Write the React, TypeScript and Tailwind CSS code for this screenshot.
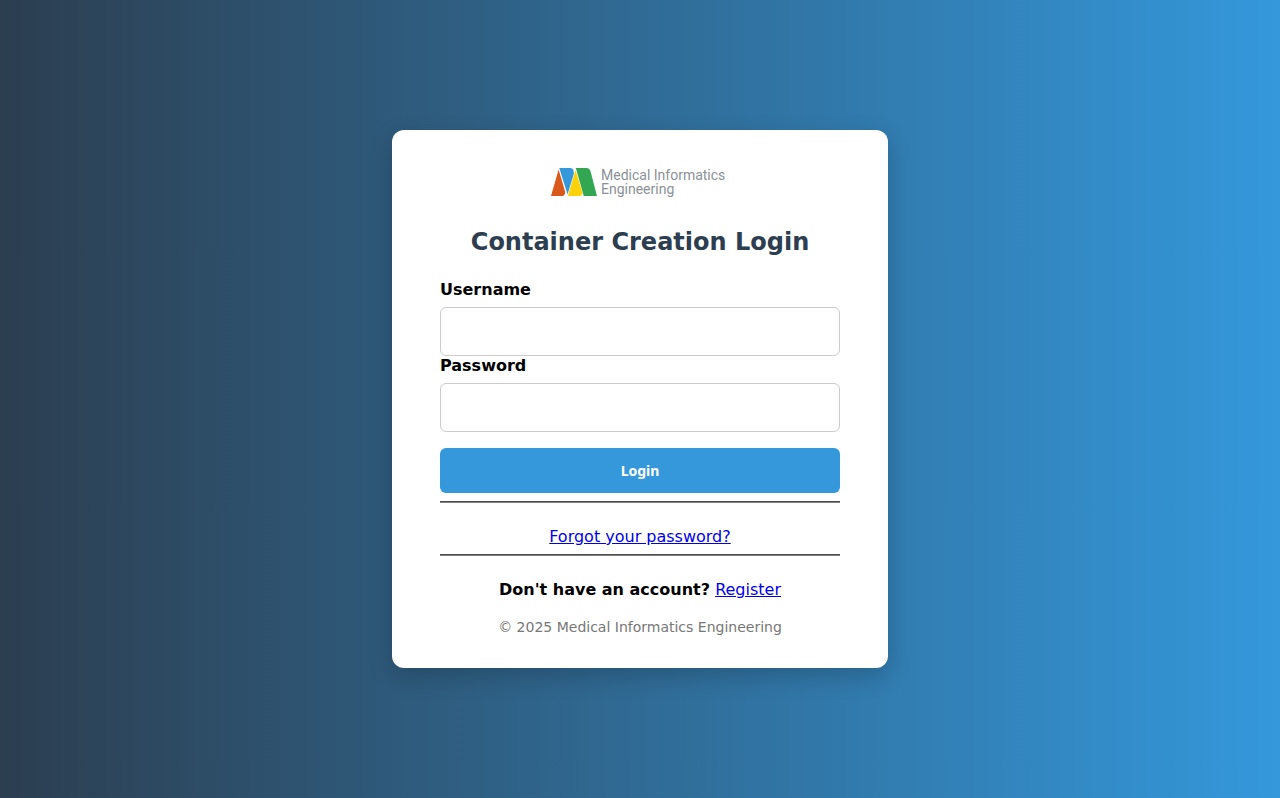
import type { FormEvent } from 'react';

interface FieldProps {
  id: string;
  label: string;
  type: string;
}

function Logo() {
  return (
    <div className="flex h-10 w-[178px] items-center gap-1">
      <svg className="h-7 w-[46px] shrink-0" viewBox="18 24 139 84" aria-hidden="true">
        <path d="M18 108 L41 28 L61 96 Q60 108 52 108 Z" fill="#d9581c" />
        <path d="M43 24 H76 Q84 24 86 31 Q88 38 86 45 L68 104 Z" fill="#3498db" />
        <path d="M69 108 L92 30 L113 98 Q113 108 104 108 Z" fill="#fdd20a" />
        <path d="M93 24 H126 Q134 24 137 32 L157 108 H117 Z" fill="#33a652" />
      </svg>
      <div className="whitespace-nowrap font-[Roboto,sans-serif] text-sm leading-[14px] text-[#8b9197]">
        Medical Informatics
        <br />
        Engineering
      </div>
    </div>
  );
}

function Field({ id, label, type }: FieldProps) {
  return (
    <div>
      <label htmlFor={id} className="mb-2 block font-bold">
        {label}
      </label>
      <input
        id={id}
        name={id}
        type={type}
        className="block h-[49px] w-full rounded-md border border-[#cccccc] bg-white px-3"
      />
    </div>
  );
}

function Divider() {
  return <hr className="my-2 border-t border-b border-t-[#4d4d4d] border-b-[#7f7f7f]" />;
}

export default function App() {
  const handleSubmit = (event: FormEvent) => {
    event.preventDefault();
  };

  return (
    <div className="flex min-h-screen items-center justify-center bg-[linear-gradient(to_right,#2c3e50,#3498db)] font-['DejaVu_Sans',sans-serif] text-base leading-[19px] text-black">
      <main className="w-full max-w-[496px] rounded-xl bg-white px-12 py-8 shadow-[0_8px_24px_rgba(0,0,0,0.2)]">
        <div className="flex justify-center">
          <Logo />
        </div>
        <h1 className="mt-[26px] mb-6 text-center text-2xl leading-7 font-bold text-[#2c3e50]">
          Container Creation Login
        </h1>

        <form onSubmit={handleSubmit}>
          <Field id="username" label="Username" type="text" />
          <Field id="password" label="Password" type="password" />
          <button
            type="submit"
            className="mt-4 block h-[45px] w-full rounded-md bg-[#3498db] font-['Noto_Sans',sans-serif] text-sm font-bold text-white"
          >
            Login
          </button>
        </form>

        <Divider />
        <p className="mt-6 text-center">
          <a href="#forgot" className="text-[#0000ee] underline">
            Forgot your password?
          </a>
        </p>
        <Divider />
        <p className="mt-6 text-center">
          <strong>Don't have an account?</strong>{' '}
          <a href="#register" className="text-[#0000ee] underline">
            Register
          </a>
        </p>

        <footer className="mt-5 text-center text-sm leading-[17px] text-[#777777]">
          © 2025 Medical Informatics Engineering
        </footer>
      </main>
    </div>
  );
}
